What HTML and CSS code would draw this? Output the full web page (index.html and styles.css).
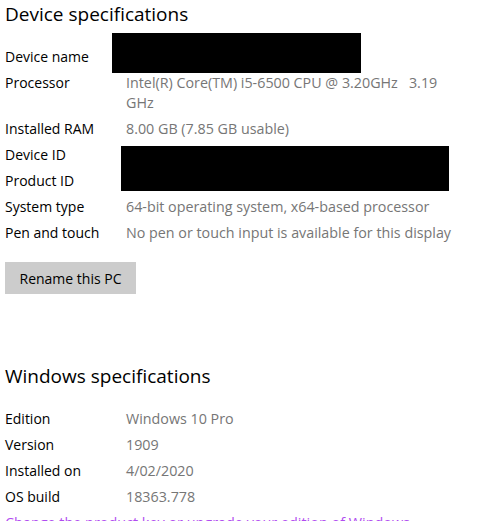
FILE: index.html
```html
<!DOCTYPE html>
<html>
<head>
<meta charset="utf-8">
<link rel="stylesheet" href="styles.css">
</head>
<body>
<div class="page">
  <section class="section">
    <h2 class="heading">Device specifications</h2>
    <div class="specs">
      <div class="label">Device name</div><div class="value">&nbsp;</div>
      <div class="label">Processor</div><div class="value">Intel(R) Core(TM) i5-6500 CPU @ 3.20GHz&nbsp;&nbsp;&nbsp;3.19 GHz</div>
      <div class="label">Installed RAM</div><div class="value">8.00 GB (7.85 GB usable)</div>
      <div class="label">Device ID</div><div class="value">&nbsp;</div>
      <div class="label">Product ID</div><div class="value">&nbsp;</div>
      <div class="label">System type</div><div class="value">64-bit operating system, x64-based processor</div>
      <div class="label">Pen and touch</div><div class="value">No pen or touch input is available for this display</div>
    </div>
    <div class="redact redact-name"></div>
    <div class="redact redact-ids"></div>
    <button class="btn">Rename this PC</button>
  </section>
  <section class="section win">
    <h2 class="heading">Windows specifications</h2>
    <div class="specs">
      <div class="label">Edition</div><div class="value">Windows 10 Pro</div>
      <div class="label">Version</div><div class="value">1909</div>
      <div class="label">Installed on</div><div class="value">4/02/2020</div>
      <div class="label">OS build</div><div class="value">18363.778</div>
    </div>
    <a class="link" href="#">Change the product key or upgrade your edition of Windows</a>
  </section>
</div>
</body>
</html>
```
FILE: styles.css
```css
html, body {
  margin: 0;
  padding: 0;
  background: #ffffff;
}
body {
  font-family: "Open Sans", "Noto Sans", sans-serif;
  font-size: 14px;
  color: #000;
  overflow: hidden;
}
.page {
  padding-left: 5px;
  width: 474px;
}
.section {
  position: relative;
}
.heading {
  margin: 0;
  font-size: 19px;
  font-weight: 400;
  line-height: 28px;
  height: 28px;
  color: #000;
}
.specs {
  margin-top: 19px;
  display: grid;
  grid-template-columns: 121px 340px;
  row-gap: 6px;
  line-height: 20px;
}
.label {
  color: #000;
}
.value {
  color: #767676;
  font-size: 14.3px;
}
.redact {
  position: absolute;
  background: #000;
}
.redact-name {
  left: 107px;
  top: 33px;
  width: 249px;
  height: 40px;
}
.redact-ids {
  left: 116px;
  top: 146px;
  width: 328px;
  height: 45px;
}
.btn {
  display: block;
  margin-top: 19px;
  width: 131px;
  height: 32px;
  border: none;
  background: #cccccc;
  color: #000;
  font-family: inherit;
  font-size: 14px;
  padding: 0;
}
.win {
  margin-top: 68px;
}
.link {
  display: block;
  margin-top: 6px;
  line-height: 20px;
  font-size: 14.4px;
  color: #b14cf0;
  text-decoration: none;
  white-space: nowrap;
}
```
